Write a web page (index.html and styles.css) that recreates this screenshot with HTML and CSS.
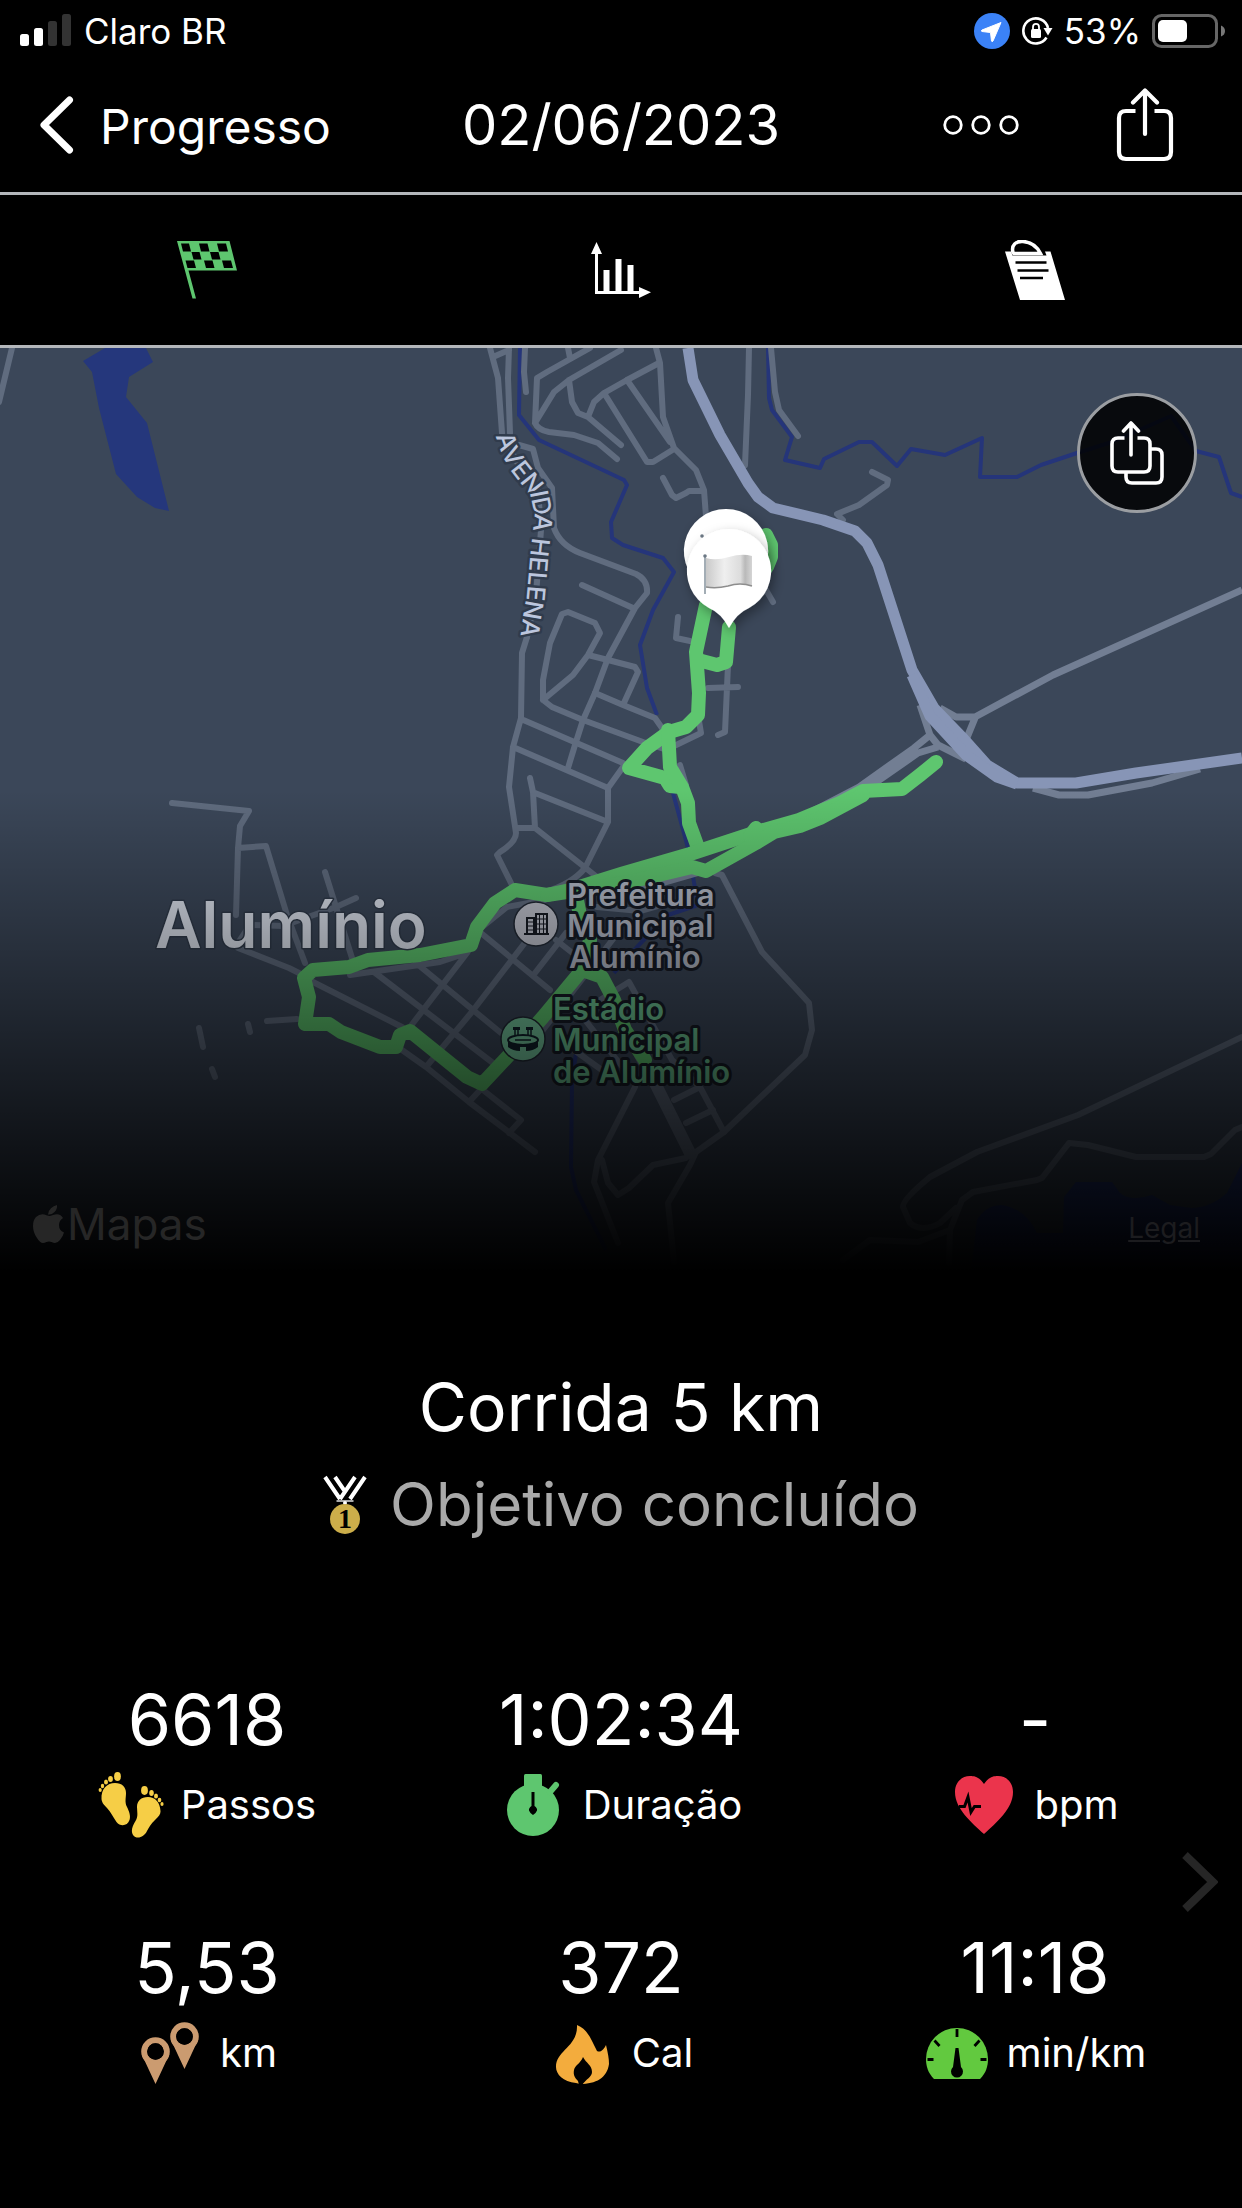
FILE: index.html
```html
<!DOCTYPE html>
<html lang="pt-BR">
<head>
<meta charset="utf-8">
<meta name="viewport" content="width=device-width, initial-scale=1">
<title>Corrida 5 km</title>
<link rel="stylesheet" href="styles.css">
</head>
<body>
<div class="status">
  <div class="status-group">
    <svg class="signal" width="52" height="34" viewBox="0 0 52 34" aria-hidden="true">
      <rect x="0" y="20" width="9" height="12" rx="2.500" fill="#fff"/>
      <rect x="14" y="14" width="9" height="18" rx="2.500" fill="#fff"/>
      <rect x="28" y="7" width="9" height="25" rx="2.500" fill="#333"/>
      <rect x="42" y="0" width="9" height="32" rx="2.500" fill="#333"/>
    </svg>
    <span>Claro BR</span>
  </div>
  <div class="status-group status-right">
    <svg width="36" height="36" viewBox="0 0 36 36" aria-hidden="true">
      <circle cx="18" cy="18" r="18" fill="#3b82f7"/>
      <path d="M27 9.500L8 17q-1.500 1 0 1.500l8.500 1 1 8.500q.7 1.500 1.500 0Z" fill="#fff" stroke="#fff" stroke-linejoin="round"/>
    </svg>
    <svg width="32" height="30" viewBox="0 0 32 30" aria-hidden="true">
      <path d="M25.500 21.500A12.500 12.500 0 1 1 27 12" fill="none" stroke="#fff" stroke-width="2.600"/>
      <path d="M22.500 12h9l-4.500 7.500Z" fill="#fff"/>
      <rect x="10" y="13" width="10" height="9" rx="1.500" fill="#fff"/>
      <path d="M12 14v-3a3 3.200 0 0 1 6 0v3" fill="none" stroke="#fff" stroke-width="1.800"/>
    </svg>
    <span>53%</span>
    <svg class="battery" width="74" height="34" viewBox="0 0 74 34" aria-hidden="true">
      <rect x="1.500" y="1.500" width="63" height="31" rx="8" fill="none" stroke="#666" stroke-width="3"/>
      <rect x="6" y="6" width="29" height="22" rx="5" fill="#fff"/>
      <path d="M69 11.500q4 1.500 4 5.500t-4 5.500Z" fill="#777"/>
    </svg>
  </div>
</div>

<header class="nav">
  <a class="back" href="#">
    <svg width="34" height="58" viewBox="0 0 34 58" aria-hidden="true"><path d="M29.500 4L4 29l25.500 25" fill="none" stroke="#fff" stroke-width="7" stroke-linecap="round" stroke-linejoin="round"/></svg>
    <span>Progresso</span>
  </a>
  <span class="date">02/06/2023</span>
  <div class="actions">
    <button type="button" aria-label="Mais opções">
      <svg width="76" height="20" viewBox="0 0 76 20" aria-hidden="true"><g fill="none" stroke="#fff" stroke-width="2.800"><circle cx="10" cy="10" r="8.300"/><circle cx="38" cy="10" r="8.300"/><circle cx="66" cy="10" r="8.300"/></g></svg>
    </button>
    <button type="button" aria-label="Compartilhar">
      <svg width="58" height="74" viewBox="0 0 58 74" aria-hidden="true"><g fill="none" stroke="#fff" stroke-width="4.200" stroke-linecap="round" stroke-linejoin="round"><path d="M29 3v43M17 14.500L29 2.500l12 12"/><path stroke-linecap="butt" d="M19.500 23H10q-7 0-7 7v34q0 7 7 7h38q7 0 7-7V30q0-7-7-7h-9.500"/></g></svg>
    </button>
  </div>
</header>

<nav class="tabs" aria-label="Seções">
  <button type="button" aria-label="Resumo">
    <svg width="60" height="60" viewBox="0 0 60 60" aria-hidden="true">
      <path d="M0 1h52.500L60 30.500H11.500L19 58.500h-3.500Z" fill="#5ec66f"/>
      <g fill="#000"><path d="M4 3.500h8l2 8H6ZM22 3.500h8.500l2 8H24ZM40 3.500h9l2 8h-9Z"/><path d="M14.500 12h8l2 7.500h-8ZM33 12h8.500l2 7.500H35Z"/><path d="M8.500 20.500h8.500l2 7.500h-8.500ZM27 20.500h8.500l2 7.500H29ZM45 20.500h9l2 7.500h-9Z"/></g>
    </svg>
  </button>
  <button type="button" aria-label="Gráficos">
    <svg width="60" height="60" viewBox="0 0 60 60" aria-hidden="true">
      <path d="M5.500 8v44.500H51" fill="none" stroke="#fff" stroke-width="3"/>
      <path d="M5.500 2l5.500 12H0ZM48 47l12 5.200L48 58Z" fill="#fff"/>
      <path d="M12.500 30h6v22h-6ZM24.500 19h6v33h-6ZM36.500 25h6v27h-6Z" fill="#fff"/>
    </svg>
  </button>
  <button type="button" aria-label="Notas">
    <svg width="60" height="60" viewBox="0 0 60 60" aria-hidden="true">
      <path d="M0 11.500h6l1.500 4h34L40 11.500h5.500L60 60H15Z" fill="#fff"/>
      <path d="M8 12.500C6 5 11 1 18 1.500c9 .5 14 5 17.500 12H9Z" fill="#000" stroke="#fff" stroke-width="3.500"/>
      <path d="M10.500 22.500h31M12.500 30.500h31M15 38h23" stroke="#000" stroke-width="2.600"/>
    </svg>
  </button>
</nav>

<main>
<section class="map" aria-label="Mapa do percurso">
  <svg class="map-canvas" viewBox="0 348 1242 922" role="img" aria-label="Percurso em Alumínio">
    <defs>
      <linearGradient id="fade" x1="0" y1="0" x2="0" y2="1"><stop offset="0" stop-color="#000" stop-opacity="0"/><stop offset="1" stop-color="#000"/></linearGradient>
      <linearGradient id="cloth"><stop offset="0" stop-color="#c9c9c9"/><stop offset=".4" stop-color="#efefef"/><stop offset=".75" stop-color="#dcdcdc"/><stop offset=".85" stop-color="#b9b9b9"/><stop offset="1" stop-color="#d5d5d5"/></linearGradient>
      <filter id="shadow" x="-30%" y="-30%" width="160%" height="160%"><feDropShadow dx="3" dy="5" stdDeviation="6" flood-color="#000" flood-opacity=".35"/></filter>
      <path id="avenue" d="M504 433L511 453 520 468 531 482 539 492 542 507 543 522 540 548 538 572 536 595 533 612 526 660"/>
    </defs>
    <rect x="0" y="348" width="1242" height="922" fill="#3b4759"/>
    <g class="water">
      <path d="M83 361L105 348H146L153 362 129 377 126 397 147 423 169 511 155 508 137 497 116 474 99 408 92 372Z"/>
      <path d="M1242 1163L1227 1193Q1210 1208 1191 1208L1170 1205 1152 1195Q1130 1202 1120 1193L1112 1182H1076L1064 1197 1063 1233H1037Q1025 1208 1001 1205 985 1206 977 1220L970 1280H1242Z"/>
    </g>
    <g class="stream">
      <path d="M520 348L519 415 539 440 624 480 627 485 611 522 612 538 623 545 663 558 674 572 653 610 640 645 647 688 657 715M673 793L688 848 698 905 668 915 637 947 614 973M576 1053L572 1083 571 1167 576 1190 606 1250"/>
      <path d="M768 348L769 398 772 410 792 437 785 460 820 468 824 459 859 442H872L897 466 911 449 945 455 982 438 980 477H1017L1041 465 1077 453 1112 442 1171 416 1196 451 1219 457 1231 493 1242 497"/>
    </g>
    <g class="road">
      <path d="M12 348L-1 402"/>
      <path d="M490 348L498 378 502 433M509 348L508 378 510 433M493 357L509 350M506 440L520 468 538 490 541 530 536 595 527 637"/>
      <path d="M519 445L533 449 538 468 552 488 554 528Q560 545 580 553L636 574Q648 580 647 593L635 608 608 658 595 693 583 720 575 745 568 768M582 585L633 608"/>
      <path d="M543 700V680L550 643 562 614 568 612 595 623 600 633 588 655 573 675 543 700 552 707 583 720 643 742 667 750M588 655L608 660 635 667 638 672 623 705M595 693L623 705 655 718 662 728"/>
      <path d="M527 637L522 653 521 718 513 747 509 787 516 833Q516 842 500 852L497 855 513 887M521 719L623 763M513 747L608 788M623 767L608 788V822L585 868Q572 884 545 892M530 778L533 792 535 828H516M535 793L608 822M535 828L597 877"/>
      <path d="M525 348L524 372 526 392M590 348L547 372 537 378 535 423Q538 430 549 432L574 435 598 443 617 459M568 348L570 358M621 350L569 380 554 392 535 423M569 380L572 402 578 413 588 417 621 445M588 417L594 402 604 393 627 380 659 363M604 393L647 462H653L674 449"/>
      <path d="M656 348L660 363 663 417 674 448 696 470 704 490 707 530M627 380L670 442M663 478L672 495 676 498 686 493 689 491H704M749 348L748 395 745 465M771 348L775 392 779 410 798 436"/>
      <path d="M872 472L888 480 887 485 859 505 837 514 843 520M678 617L676 638 690 641M766 590L773 602M728 665L725 732 718 735M708 688L738 687M698 715L701 733 672 747M680 765L686 785"/>
      <path d="M172 803L249 811 240 826 238 848 236 915M238 848L266 846 287 915 305 963M325 872L336 907 352 958M238 943L250 925 283 926 336 907 356 898M238 948L289 968 299 973M267 1021L297 1019M199 1028L203 1047M248 1024L250 1032M212 1069L215 1077"/>
      <path d="M313 982L402 1027M374 972L493 1063M416 963L501 1033M402 1050L426 1067 469 1102 535 1152M483 1090L521 1120 509 1133M469 1102L482 1088M467 953L410 1027M527 940L471 1013 426 1067M481 933L550 990M556 940L594 970M566 933L535 973M350 975L440 962 467 953 481 928 507 907 545 900"/>
      <path d="M597 907L640 911 668 903M543 1030L620 930M600 1000L629 982 672 1060 700 1087 724 1132M585 1020L625 1070M560 1040L606 1073M605 1000L640 1060M635 1087L598 1160 594 1182 618 1243M602 1160L608 1183 618 1195 629 1188 653 1165 686 1158M674 1100L700 1087M686 1123L713 1110"/>
      <path d="M715 873L722 875 762 952 799 992 809 1003 812 1030 805 1055 724 1132 696 1152 690 1165 668 1203 674 1262"/>
      <path d="M1242 1037L1078 1115 977 1152 930 1177Q902 1200 903 1207L910 1223Q922 1233 940 1223L956 1208M1242 1127L1235 1130 1211 1154 1204 1157H1136L1088 1145 1069 1143 1042 1178 1037 1180 973 1192 962 1200 950 1230 918 1242 870 1240 843 1260M950 1230L949 1263"/>
      <path class="wide" d="M640 1055L657 1087 690 1153"/>
    </g>
    <g class="ramp">
      <path d="M1242 590L1053 675 975 717H956L940 708M975 718L966 740M920 705L930 735 938 745 966 759M930 735L914 748 859 787 780 828 700 872 620 895M938 747L918 753 865 790M1033 788L1059 795H1088L1152 783 1200 769"/>
    </g>
    <g class="highway">
      <path d="M688 348L693 380 720 435 748 483 758 497 773 508 823 520 855 531 867 543 878 565 912 670 934 708 962 737 987 765 1017 783H1076L1136 773 1242 758"/>
      <path d="M912 675L930 716 966 755 997 777 1017 784"/>
    </g>
    <g class="route">
      <path d="M766 535L771 545V557L767 567"/>
      <path d="M729 627L726 662 717 665 698 660"/>
      <path d="M706 605L696 652 699 693 698 715 686 727 669 732 647 748 629 768 665 778 670 786 680 787"/>
      <path d="M668 730L670 767 682 787 688 803 689 823 697 845"/>
      <path d="M936 762L920 775 902 789 863 791 840 803 799 820 760 831 690 854 621 874 570 890 547 895 515 890 495 903 477 927 471 945 420 955 368 960 349 967 313 970 304 978 309 997 305 1024 329 1024 341 1032 380 1047H396L400 1035 410 1031 467 1077 482 1084 511 1053 543 1017 582 970 602 977 614 1000 625 1030 645 1060"/>
      <path d="M863 795L820 818 800 826 774 832 756 843 706 871 692 867 629 882 600 887 547 895M756 828L750 836M576 895L580 915 590 940 583 970"/>
    </g>
    <g class="poi">
      <circle cx="536" cy="924" r="22" fill="#c0c3ce" stroke="#222a36" stroke-width="1.500"/>
      <path d="M527 934V918H534V934ZM536 934V914H547V934ZM524 934H549" fill="none" stroke="#161b24" stroke-width="2"/>
      <path d="M528 922h5M528 926h5M528 930h5M539.500 914v20M543.500 914v20M536 919h11M536 924h11M536 929h11" stroke="#161b24"/>
      <circle cx="523" cy="1039" r="22" fill="#76caa0" stroke="#222a36" stroke-width="1.500"/>
      <ellipse cx="523" cy="1040" rx="15" ry="5" fill="none" stroke="#10202a" stroke-width="2"/>
      <path d="M508 1041q15 8 30 0v6q-5 4-12 4v-4h-6v4q-7 0-12-4ZM513 1027h7v3h-7ZM526 1027h7v3h-7Z" fill="#10202a"/>
      <path d="M515 1030v5M518 1030v5M528 1030v5M531 1030v5M515 1040h16" stroke="#10202a" stroke-width="1.500"/>
    </g>
    <text class="street" dominant-baseline="central"><textPath href="#avenue">AVENIDA HELENA</textPath></text>
    <text class="city" x="155" y="948">Alumínio</text>
    <text class="place"><tspan x="567" y="906">Prefeitura</tspan><tspan x="567" y="937">Municipal</tspan><tspan x="569" y="968">Alumínio</tspan></text>
    <text class="place park"><tspan x="553" y="1020">Estádio</tspan><tspan x="553" y="1051">Municipal</tspan><tspan x="553" y="1083">de Alumínio</tspan></text>
    <rect x="0" y="790" width="1242" height="482" fill="url(#fade)"/>
    <g filter="url(#shadow)">
      <path d="M726 509a42 42 0 0 1 18 80q-10 5-18 20-8-15-18-20a42 42 0 0 1 18-80Z" fill="#fff"/>
      <circle cx="702" cy="536" r="1.800" fill="#6c7884"/>
    </g>
    <g filter="url(#shadow)">
      <path d="M729 529a42 42 0 0 1 20 79q-12 5-20 20-8-15-20-20a42 42 0 0 1 20-79Z" fill="#fff"/>
    </g>
    <path d="M706 558q10 3 23-1 13-4 23-1v30q-12-4-24 0-12 3-22 1Z" fill="url(#cloth)"/>
    <path d="M706 587q10 2 22-1 12-4 24 0" fill="none" stroke="#8d8d8d" stroke-width="1.500"/>
    <path d="M705 556v38" stroke="#a3adb5" stroke-width="2"/><circle cx="705" cy="556" r="1.800" fill="#6c7884"/>
  </svg>
  <button class="map-share" type="button" aria-label="Compartilhar mapa">
    <svg width="54" height="64" viewBox="0 0 54 64" aria-hidden="true"><g fill="none" stroke="#fff" stroke-width="3.600" stroke-linecap="round" stroke-linejoin="round"><path d="M21 2v32M13.500 10L21 2l7.500 8"/><path stroke-linecap="butt" d="M14.500 17H8q-6 0-6 6v22q0 6 6 6h26q6 0 6-6V23q0-6-6-6h-6.500M41 28h5q6 0 6 6v22q0 6-6 6H22q-6 0-6-6v-4"/></g></svg>
  </button>
  <div class="credit">
    <span class="maps">
      <svg width="32" height="38" viewBox="0 0 32 38" aria-hidden="true"><path d="M24 0q.5 4-2.500 7T15 9.500Q15 6 18 3.200 20.500.7 24 0ZM30 13q-4 2.500-4 7 0 5.500 5 7.500-1 4-4 7.500-2.500 3-5 3-1.500 0-3.500-1-2.500-.8-5 0-2 1-3.500 1-3 0-6-5Q0 27.500 0 21q0-6 3-9 2.800-2.800 6.500-2.800 2 0 4 1 2 .8 3 .8t3.500-1q2.200-.8 4-.8 4 .3 6 3.800Z" fill="#262626"/></svg>
      <span>Mapas</span>
    </span>
    <a href="#">Legal</a>
  </div>
</section>

<section class="summary">
  <h1>Corrida 5 km</h1>
  <p class="goal">
    <svg width="44" height="64" viewBox="0 0 44 64" aria-hidden="true">
      <g fill="none" stroke="#fff" stroke-width="4"><path d="M2 5L17 27M12 5L23 21M42 5L27 27M32 5L17 27"/></g>
      <path d="M13.500 29h17" stroke="#aaa" stroke-width="2"/><circle cx="22" cy="31" r="2" fill="#fff"/>
      <circle cx="22" cy="47" r="15" fill="#ccae4a"/>
      <text class="medal-rank" x="22" y="56" text-anchor="middle">1</text>
    </svg>
    <span>Objetivo concluído</span>
  </p>
</section>

<section class="stats" aria-label="Estatísticas">
  <div class="stat"><strong>6618</strong><span class="label">
    <svg width="66" height="66" viewBox="0 0 66 66" aria-hidden="true"><g fill="#f6ce46"><path d="M3.500 27C3 17 9 11 17 11c7 0 11 4 11 10 0 5-1.500 9 1 14 2 4 4 9 2.500 13-2 6-9 7-13 2C15 45 13 40 9 36 5 32 3.800 30 3.500 27Z"/><ellipse cx="19.500" cy="4.500" rx="3.400" ry="4.400"/><ellipse cx="12.500" cy="7" rx="2.400" ry="3"/><ellipse cx="8" cy="10" rx="2" ry="2.500"/><ellipse cx="4.500" cy="14" rx="1.700" ry="2.200"/><ellipse cx="2.200" cy="18" rx="1.600" ry="2"/><path d="M62.500 39C62 30 57 25 50 25c-7 0-11 4-11 10 0 5 1.500 9-1.500 14-3 5-5 10-2.500 14 4 5 11 2 14-4 2-4 4-7 8-11 4-4 5.700-6 5.500-9Z"/><ellipse cx="46.500" cy="18.500" rx="3.400" ry="4.400"/><ellipse cx="53.500" cy="21" rx="2.300" ry="3"/><ellipse cx="58" cy="24" rx="2" ry="2.500"/><ellipse cx="61.500" cy="28" rx="1.800" ry="2.200"/><ellipse cx="64" cy="32" rx="1.600" ry="2"/></g></svg>
    <span>Passos</span></span></div>
  <div class="stat"><strong>1:02:34</strong><span class="label">
    <svg width="66" height="66" viewBox="0 0 66 66" aria-hidden="true"><g fill="#5ec66f"><circle cx="33" cy="38" r="26"/><rect x="24" y="2" width="18" height="14" rx="1.500"/><path d="M50 20l6-7" stroke="#5ec66f" stroke-width="6" stroke-linecap="round"/></g><path d="M31.500 20h3v14q3 2 2.500 4.500-.5 2-4 4.500-3.500-2.500-4-4.500Q28.500 36 31.500 34Z" fill="#000"/></svg>
    <span>Duração</span></span></div>
  <div class="stat"><strong>-</strong><span class="label">
    <svg width="66" height="66" viewBox="0 0 66 66" aria-hidden="true"><path d="M33 12C38 5 42 4 47 4c9 0 15 7 15 16 0 17-17 31-29 42C21 51 4 37 4 20 4 11 10 4 19 4c5 0 9 1 14 8Z" fill="#eb344c"/><path d="M8 34.500h5.500L17 25l3 15 3.500-5.500H30" fill="none" stroke="#000" stroke-width="3"/></svg>
    <span>bpm</span></span></div>
  <div class="stat"><strong>5,53</strong><span class="label">
    <svg width="66" height="66" viewBox="0 0 66 66" aria-hidden="true"><g fill="none" stroke="#cb9b70" stroke-width="6"><circle cx="18.500" cy="31.500" r="11.300"/><circle cx="47.500" cy="16.500" r="11.300"/></g><path d="M4.500 34q7 12 14 10t14-10L18.500 64ZM33.500 19q7 12 14 10t14-10L47.500 49Z" fill="#cb9b70"/><g fill="#000"><circle cx="18.500" cy="31.500" r="8.300"/><circle cx="47.500" cy="16.500" r="8.300"/></g></svg>
    <span>km</span></span></div>
  <div class="stat"><strong>372</strong><span class="label">
    <svg width="66" height="66" viewBox="0 0 66 66" aria-hidden="true"><path d="M28 5C40 10 43 22 48 31c4 2 7-2 9-6 2 8 3 14 3 19-2 14-13 20-29 20l-4-1C14 62 7 54 7 47c0-17 22-20 21-42Z" fill="#f3ac3d"/><path d="M34 37c3 6 9 8 9 15 0 5-6 7-10 13h-3l-1-4c-3-3-5-6-4-11 1-5 7-7 9-13Z" fill="#000"/></svg>
    <span>Cal</span></span></div>
  <div class="stat"><strong>11:18</strong><span class="label">
    <svg width="66" height="66" viewBox="0 0 66 66" aria-hidden="true"><path d="M10 59C4 53 2 46 2 39a31 31 0 0 1 62 0c0 7-2 14-8 20Z" fill="#62c93f"/><path d="M33 9v8M10.500 20.500l5 5.500M55.500 20.500l-5 5.500M3.500 39.500h6M62.500 39.500h-6" stroke="#000" stroke-width="2.800"/><path d="M31.500 28h3L37 47a6 6 0 1 1-8 0Z" fill="#000"/></svg>
    <span>min/km</span></span></div>
  <button class="next" type="button" aria-label="Próxima página">
    <svg width="36" height="60" viewBox="0 0 36 60" aria-hidden="true"><path d="M3 3L31 30 3 57" fill="none" stroke="#262626" stroke-width="8"/></svg>
  </button>
</section>
</main>
</body>
</html>
```
FILE: styles.css
```css
* { box-sizing: border-box; }

body {
  margin: 0;
  min-height: 100vh;
  background: #000;
  color: #fff;
  font-family: Inter, "Liberation Sans", sans-serif;
}

svg { display: block; flex: none; }

button {
  padding: 0;
  border: 0;
  background: none;
  color: inherit;
  font: inherit;
}

a { color: inherit; text-decoration: none; }

.status {
  display: flex;
  justify-content: space-between;
  height: 62px;
  padding: 0 16px 0 20px;
  font-size: 35px;
  line-height: 40px;
}

.status-group { display: flex; align-items: center; gap: 12px; }
.status-right { gap: 11px; }

.nav {
  display: grid;
  grid-template-columns: 1fr auto 1fr;
  align-items: center;
  height: 133px;
  padding: 0 40px 4px;
  border-bottom: 3px solid #b4b7bb;
}

.back { display: flex; align-items: center; gap: 26px; font-size: 48px; line-height: 58px; }
.back span { padding-top: 4px; }
.date { font-size: 56px; line-height: 68px; }
.actions { display: flex; align-items: center; justify-content: flex-end; gap: 97px; padding-right: 28px; }

.tabs {
  display: grid;
  grid-template-columns: repeat(3, 1fr);
  height: 153px;
  border-bottom: 3px solid #b4b7bb;
}
.tabs button { display: grid; place-items: center; }

.map { position: relative; }
.map-canvas { width: 100%; height: auto; }

.water { fill: #25377c; }
.stream, .road, .ramp, .highway, .route { fill: none; stroke-linejoin: round; }
.stream { stroke: #25357a; stroke-width: 4; }
.road { stroke: #606c7f; stroke-width: 6; stroke-linecap: round; }
.road .wide { stroke-width: 12; }
.ramp { stroke: #727e93; stroke-width: 7; }
.highway { stroke: #8795b6; stroke-width: 11; }
.route { stroke: #5ec66f; stroke-width: 14; stroke-linecap: round; }

.street, .city, .place { paint-order: stroke; stroke-linejoin: round; }
.street { font-size: 25px; font-weight: 500; fill: #bcc6dd; stroke: #303b4c; stroke-width: 5; }
.city { font-size: 64px; font-weight: 600; fill: #dde3ee; stroke: #303b4b; stroke-width: 3; }
.place { font-size: 31px; font-weight: 600; fill: #b4bac8; stroke: #161b26; stroke-width: 6; }
.place.park { fill: #6cc493; }

.map-share {
  position: absolute;
  top: 45px;
  right: 45px;
  display: grid;
  place-items: center;
  width: 120px;
  height: 120px;
  border: 3px solid #9b9ea2;
  border-radius: 50%;
  background: rgba(0, 0, 0, 0.85);
}

.credit {
  position: absolute;
  right: 42px;
  bottom: 20px;
  left: 33px;
  display: flex;
  align-items: flex-end;
  justify-content: space-between;
  color: #262626;
  font-size: 28px;
  line-height: 44px;
}
.maps { display: flex; align-items: center; gap: 2px; font-size: 44px; line-height: 52px; }
.credit a { color: #1c1c1f; text-decoration: underline; }

.summary { padding-top: 95px; text-align: center; }
.summary h1 { margin: 0; font-size: 66px; font-weight: 400; line-height: 84px; }
.goal {
  display: flex;
  align-items: center;
  justify-content: center;
  gap: 23px;
  margin: 16px 0 0;
  color: #a9a9a9;
  font-size: 60px;
  line-height: 78px;
}
.medal-rank { font: bold 28px "Liberation Serif", serif; fill: #000; }

.stats {
  position: relative;
  display: grid;
  grid-template-columns: repeat(3, 1fr);
  row-gap: 88px;
  padding: 135px 0 60px;
}
.stat { display: flex; flex-direction: column; align-items: center; gap: 10px; }
.stat strong { font-size: 70px; font-weight: 400; line-height: 84px; }
.label { display: flex; align-items: center; gap: 17px; font-size: 40px; line-height: 66px; }

.next { position: absolute; top: 309px; right: 24px; }
```
